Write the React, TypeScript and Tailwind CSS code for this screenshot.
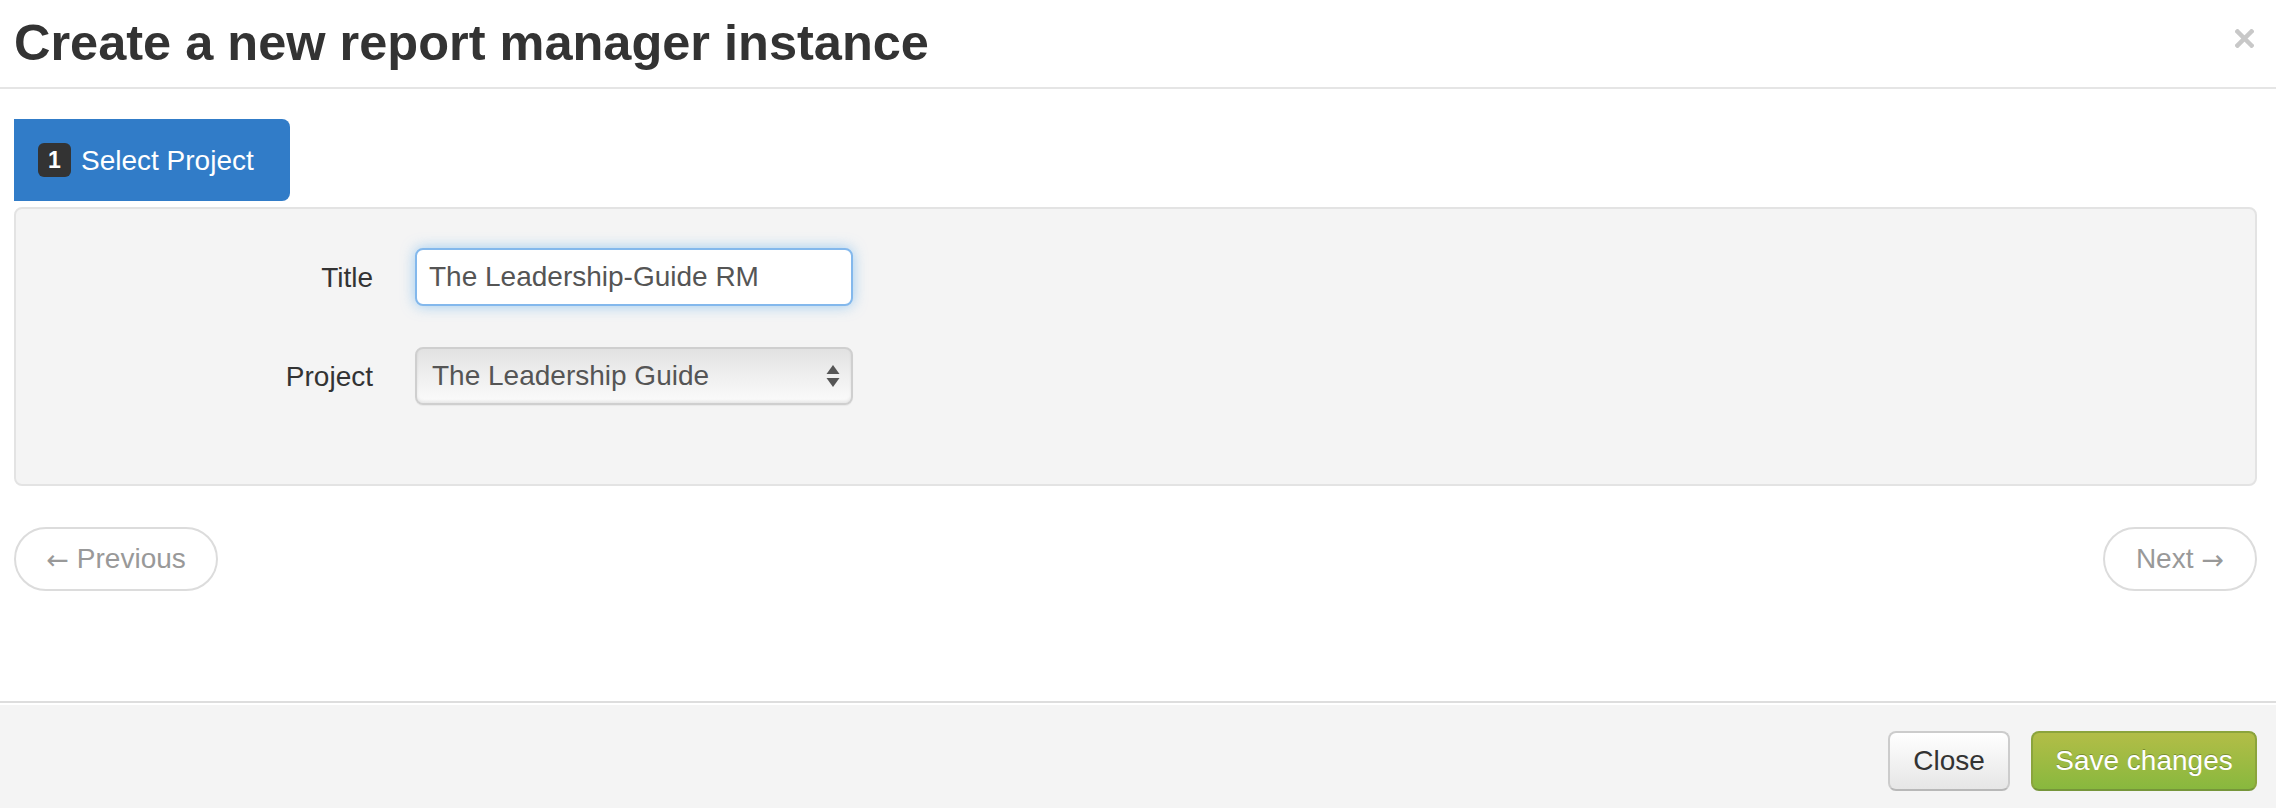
import React from "react";

export default function App() {
  return (
    <div className="w-[2276px] h-[808px] bg-white flex flex-col font-['Liberation_Sans','Helvetica_Neue',Arial,sans-serif] text-[#333]">
      {/* Header */}
      <div className="h-[89px] shrink-0 border-b-2 border-[#e5e5e5] flex items-center justify-between pl-[14px] pr-[22px]">
        <h3 className="text-[50.5px] leading-[50px] font-bold text-[#333] pb-[2px]">
          Create a new report manager instance
        </h3>
        <button className="w-[19px] h-[19px] mb-[10px] flex items-center justify-center" aria-label="Close">
          <svg width="19" height="19" viewBox="0 0 19 19">
            <path d="M2.5 2.5 L16.5 16.5 M16.5 2.5 L2.5 16.5" stroke="#c8c8c8" strokeWidth="4.5" strokeLinecap="square" />
          </svg>
        </button>
      </div>

      {/* Body */}
      <div className="flex-1 flex flex-col pl-[14px] pr-[19px] pt-[30px]">
        <div className="flex">
          <div className="h-[82px] w-[276px] bg-[#317cc8] rounded-r-[8px] flex items-center pl-[24px] gap-[10px]">
            <span className="w-[33px] h-[34px] rounded-[6px] bg-[#333] text-white text-[23px] font-bold flex items-center justify-center leading-none">
              1
            </span>
            <span className="text-white text-[28px] leading-none pt-[2px]">Select Project</span>
          </div>
        </div>

        <div className="mt-[6px] h-[279px] bg-[#f4f4f4] border-2 border-[#e3e3e3] rounded-[8px] pt-[39px] flex flex-col gap-[41px]">
          <div className="flex items-center">
            <label className="w-[357px] text-right text-[28px] leading-none text-[#333] pt-[2px]">Title</label>
            <div className="ml-[42px] w-[438px] h-[58px] bg-white border-2 border-[#83b8ec] rounded-[8px] shadow-[0_0_14px_rgba(82,168,236,0.55)] flex items-center pl-[12px] text-[28px] text-[#555] leading-none">
              The Leadership-Guide RM
            </div>
          </div>
          <div className="flex items-center">
            <label className="w-[357px] text-right text-[28px] leading-none text-[#333] pt-[2px]">Project</label>
            <div className="ml-[42px] w-[438px] h-[58px] border-2 border-[#cfcfcf] rounded-[8px] bg-gradient-to-b from-[#e2e2e2] via-[#efefef] to-[#fbfbfb] shadow-[inset_0_-2px_3px_rgba(0,0,0,0.08),0_1px_1px_rgba(0,0,0,0.05)] flex items-center justify-between pl-[15px] pr-[11px] text-[28px] text-[#555] leading-none">
              <span>The Leadership Guide</span>
              <svg width="14" height="24" viewBox="0 0 14 24">
                <path d="M0.5 10 L7 1 L13.5 10 Z" fill="#555" />
                <path d="M0.5 14 L13.5 14 L7 23 Z" fill="#555" />
              </svg>
            </div>
          </div>
        </div>

        <div className="mt-[41px] flex justify-between">
          <button className="h-[64px] w-[204px] rounded-full border-2 border-[#dcdcdc] bg-white text-[#999] text-[28px] leading-none flex items-center justify-center gap-[8px]">
            <span className="font-['DejaVu_Sans',sans-serif] text-[27px]">←</span>
            <span>Previous</span>
          </button>
          <button className="h-[64px] w-[154px] rounded-full border-2 border-[#dcdcdc] bg-white text-[#999] text-[28px] leading-none flex items-center justify-center gap-[8px]">
            <span>Next</span>
            <span className="font-['DejaVu_Sans',sans-serif] text-[27px]">→</span>
          </button>
        </div>
      </div>

      {/* Footer */}
      <div className="h-[107px] shrink-0 border-t-2 border-[#dddddd] shadow-[inset_0_2px_0_#ffffff] bg-[#f4f4f4] flex items-center justify-end gap-[21px] pr-[19px] pt-[11px]">
        <button className="h-[60px] w-[122px] rounded-[8px] border-2 border-[#cccccc] border-b-[#b8b8b8] bg-gradient-to-b from-white to-[#e6e6e6] text-[#333] text-[28px] leading-none flex items-center justify-center">
          Close
        </button>
        <button className="h-[60px] w-[226px] rounded-[8px] border-2 border-[#8ba43c] border-b-[#76953a] bg-gradient-to-b from-[#b2bd47] to-[#88b83e] text-white text-[28px] leading-none flex items-center justify-center [text-shadow:0_-1px_0_rgba(0,0,0,0.25)]">
          Save changes
        </button>
      </div>
    </div>
  );
}
